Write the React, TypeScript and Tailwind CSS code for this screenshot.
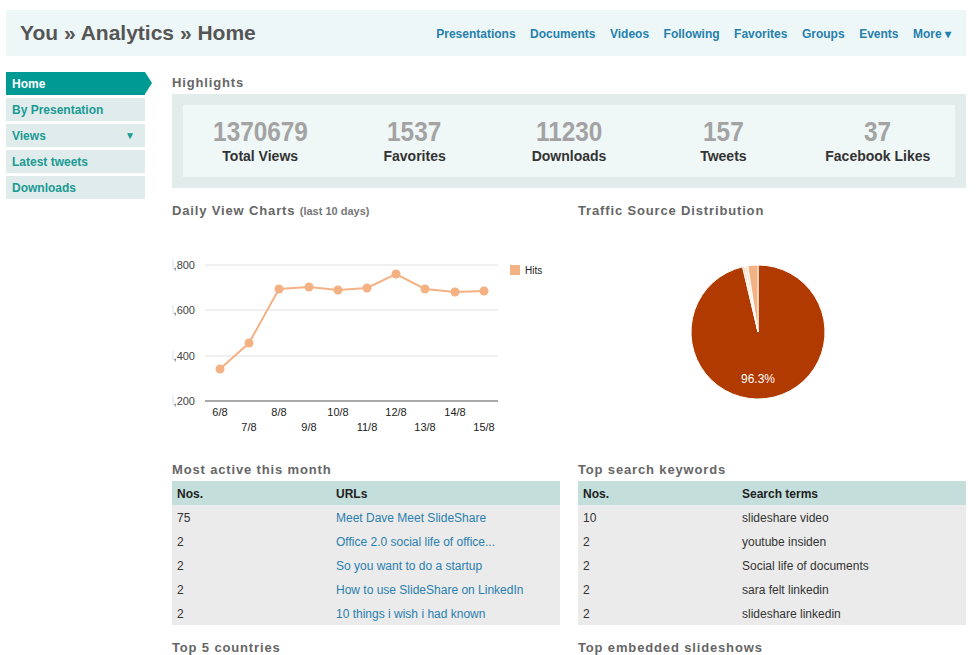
import React from 'react';

const navLinks = ['Presentations', 'Documents', 'Videos', 'Following', 'Favorites', 'Groups', 'Events'];

const sideItems = [
  { label: 'By Presentation' },
  { label: 'Views', caret: true },
  { label: 'Latest tweets' },
  { label: 'Downloads' },
];

const stats = [
  { value: '1370679', label: 'Total Views' },
  { value: '1537', label: 'Favorites' },
  { value: '11230', label: 'Downloads' },
  { value: '157', label: 'Tweets' },
  { value: '37', label: 'Facebook Likes' },
];

const points = [
  { x: 48, y: 147, label: '6/8', row: 0 },
  { x: 77, y: 121, label: '7/8', row: 1 },
  { x: 107, y: 67, label: '8/8', row: 0 },
  { x: 137, y: 65, label: '9/8', row: 1 },
  { x: 166, y: 68, label: '10/8', row: 0 },
  { x: 195, y: 66, label: '11/8', row: 1 },
  { x: 224, y: 52, label: '12/8', row: 0 },
  { x: 253, y: 67, label: '13/8', row: 1 },
  { x: 283, y: 70, label: '14/8', row: 0 },
  { x: 312, y: 69, label: '15/8', row: 1 },
];

const activeRows = [
  ['75', 'Meet Dave Meet SlideShare'],
  ['2', 'Office 2.0 social life of office...'],
  ['2', 'So you want to do a startup'],
  ['2', 'How to use SlideShare on LinkedIn'],
  ['2', '10 things i wish i had known'],
];

const keywordRows = [
  ['10', 'slideshare video'],
  ['2', 'youtube insiden'],
  ['2', 'Social life of documents'],
  ['2', 'sara felt linkedin'],
  ['2', 'slideshare linkedin'],
];

function SectionTitle({ children }: { children: React.ReactNode }) {
  return (
    <div className="h-[22px] text-[13px] leading-[22px] font-bold text-[#666] tracking-[0.85px]">{children}</div>
  );
}

function LineChart() {
  const grid = [43, 88, 134];
  const yLabels = [',800', ',600', ',400', ',200'];
  return (
    <svg width="388" height="237" viewBox="0 0 388 237" className="block">
      {grid.map((y) => (
        <line key={y} x1="33" x2="326" y1={y} y2={y} stroke="#e0e0e0" strokeWidth="1" />
      ))}
      <line x1="33" x2="326" y1="179" y2="179" stroke="#555" strokeWidth="1" />
      {[43, 88, 134, 179].map((y, i) => (
        <g key={y}>
          <line x1="1" x2="1" y1={y - 5} y2={y + 4} stroke="#cfe3f0" strokeWidth="1" />
          <text x="23" y={y + 4} textAnchor="end" fontSize="11" fill="#444" fontFamily="'Liberation Sans', Arial, sans-serif">
            {yLabels[i]}
          </text>
        </g>
      ))}
      <polyline
        points={points.map((p) => `${p.x},${p.y}`).join(' ')}
        fill="none"
        stroke="#f4b183"
        strokeWidth="2"
      />
      {points.map((p) => (
        <circle key={p.label} cx={p.x} cy={p.y} r="4.5" fill="#f4b183" />
      ))}
      {points.map((p) => (
        <text
          key={p.label + 't'}
          x={p.x}
          y={p.row === 0 ? 194 : 209}
          textAnchor="middle"
          fontSize="11"
          fill="#222"
          fontFamily="'Liberation Sans', Arial, sans-serif"
        >
          {p.label}
        </text>
      ))}
      <rect x="338" y="43" width="10" height="10" fill="#f4b183" />
      <text x="353" y="52" fontSize="10" fill="#222" fontFamily="'Liberation Sans', Arial, sans-serif">
        Hits
      </text>
    </svg>
  );
}

function slicePath(cx: number, cy: number, r: number, a0: number, a1: number) {
  const rad = (a: number) => ((a - 90) * Math.PI) / 180;
  const x0 = cx + r * Math.cos(rad(a0));
  const y0 = cy + r * Math.sin(rad(a0));
  const x1 = cx + r * Math.cos(rad(a1));
  const y1 = cy + r * Math.sin(rad(a1));
  const large = a1 - a0 > 180 ? 1 : 0;
  return `M${cx},${cy} L${x0},${y0} A${r},${r} 0 ${large} 1 ${x1},${y1} Z`;
}

function PieChart() {
  const cx = 180;
  const cy = 110;
  const r = 67;
  const slices = [
    { a0: 0, a1: 346.7, fill: '#b03a00' },
    { a0: 346.7, a1: 348.6, fill: '#f7c9a2' },
    { a0: 348.6, a1: 351.2, fill: '#fbe1c9' },
    { a0: 351.2, a1: 360, fill: '#f4b183' },
  ];
  return (
    <svg width="388" height="237" viewBox="0 0 388 237" className="block">
      {slices.map((s, i) => (
        <path key={i} d={slicePath(cx, cy, r, s.a0, s.a1)} fill={s.fill} stroke="#fff" strokeWidth="1" strokeLinejoin="round" />
      ))}
      <text x={cx} y={cy + 51} textAnchor="middle" fontSize="12" fill="#fff" fontFamily="'Liberation Sans', Arial, sans-serif">
        96.3%
      </text>
    </svg>
  );
}

function DataTable({ head, rows, link }: { head: [string, string]; rows: string[][]; link?: boolean }) {
  return (
    <div className="text-[12px] text-[#333]">
      <div className="grid grid-cols-[164px_1fr] h-[24px] items-center bg-[#c4dfdb] font-bold text-[#222] pt-px">
        <div className="pl-[5px]">{head[0]}</div>
        <div>{head[1]}</div>
      </div>
      {rows.map((r, i) => (
        <div key={i} className="grid grid-cols-[164px_1fr] h-[24px] items-center bg-[#ebebeb] pt-[2px]">
          <div className="pl-[5px]">{r[0]}</div>
          <div className={link ? 'text-[#2a7fae]' : ''}>{r[1]}</div>
        </div>
      ))}
    </div>
  );
}

export default function App() {
  return (
    <div className="w-[979px] h-[655px] overflow-hidden bg-white pt-[10px] font-['Liberation_Sans',Arial,sans-serif]">
      <div className="mx-[6px] w-[960px] h-[46px] bg-[#eef7f7] flex items-center justify-between pl-[14px] pr-[15px]">
        <h1 className="text-[21px] font-bold text-[#555]">You » Analytics » Home</h1>
        <nav className="flex items-center gap-[14.5px] text-[12px] font-bold text-[#2580ad] pt-px pl-[2px]">
          {navLinks.map((l) => (
            <span key={l}>{l}</span>
          ))}
          <span>More ▾</span>
        </nav>
      </div>

      <div className="flex mt-[16px] pl-[6px]">
        <aside className="w-[139px] flex flex-col gap-[3px] text-[12px] font-bold">
          <div className="relative h-[23px] bg-[#009a95] text-white flex items-center pl-[6px]">
            Home
            <span className="absolute right-[-7px] top-0 w-0 h-0 border-y-[11.5px] border-y-transparent border-l-[7px] border-l-[#009a95]" />
          </div>
          {sideItems.map((s) => (
            <div key={s.label} className="h-[23px] bg-[#e0eceb] text-[#1a9a95] flex items-center justify-between pl-[6px] pr-[10px]">
              <span>{s.label}</span>
              {s.caret && <span className="text-[10px]">▼</span>}
            </div>
          ))}
        </aside>

        <main className="ml-[27px] w-[794px]">
          <SectionTitle>Highlights</SectionTitle>
          <div className="bg-[#e1eceb] p-[11px]">
            <div className="bg-[#eff7f7] h-[72px] grid grid-cols-5 items-center">
              {stats.map((s) => (
                <div key={s.label} className="flex flex-col items-center">
                  <div className="text-[28px] leading-[30px] font-bold text-[#a3a3a3] scale-x-[0.87]">{s.value}</div>
                  <div className="text-[14px] leading-[18px] font-bold text-[#333]">{s.label}</div>
                </div>
              ))}
            </div>
          </div>

          <div className="grid grid-cols-[388px_388px] gap-x-[18px] mt-[12px]">
            <div>
              <SectionTitle>
                Daily View Charts <span className="text-[11px] text-[#777] tracking-normal">(last 10 days)</span>
              </SectionTitle>
              <LineChart />
              <SectionTitle>Most active this month</SectionTitle>
              <DataTable head={['Nos.', 'URLs']} rows={activeRows} link />
              <div className="mt-[12px]">
                <SectionTitle>Top 5 countries</SectionTitle>
              </div>
            </div>
            <div>
              <SectionTitle>Traffic Source Distribution</SectionTitle>
              <PieChart />
              <SectionTitle>Top search keywords</SectionTitle>
              <DataTable head={['Nos.', 'Search terms']} rows={keywordRows} />
              <div className="mt-[12px]">
                <SectionTitle>Top embedded slideshows</SectionTitle>
              </div>
            </div>
          </div>
        </main>
      </div>
    </div>
  );
}
